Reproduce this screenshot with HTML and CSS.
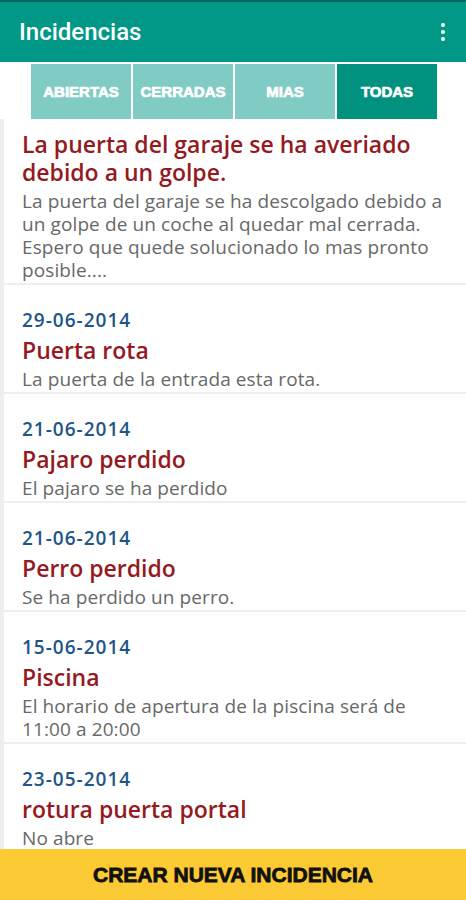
FILE: index.html
```html
<!DOCTYPE html>
<html lang="es">

<head>
    <meta charset="UTF-8" />
    <title>Incidencias</title>
    <link rel="stylesheet" href="styles.css">
</head>

<body>
    <div class="app">
        <div class="toolbar">
            <h1>Incidencias</h1>
            <div class="menu-dots"><span></span><span></span><span></span></div>
        </div>

        <div class="tabs">
            <div class="tab">ABIERTAS</div>
            <div class="tab">CERRADAS</div>
            <div class="tab">MIAS</div>
            <div class="tab active">TODAS</div>
        </div>

        <div class="list">
            <div class="card first">
                <div class="title">La puerta del garaje se ha averiado debido a un golpe.</div>
                <div class="desc">La puerta del garaje se ha descolgado debido a un golpe de un coche al quedar mal cerrada. Espero que quede solucionado lo mas pronto posible....</div>
            </div>
            <div class="card">
                <div class="date">29-06-2014</div>
                <div class="title">Puerta rota</div>
                <div class="desc">La puerta de la entrada esta rota.</div>
            </div>
            <div class="card">
                <div class="date">21-06-2014</div>
                <div class="title">Pajaro perdido</div>
                <div class="desc">El pajaro se ha perdido</div>
            </div>
            <div class="card">
                <div class="date">21-06-2014</div>
                <div class="title">Perro perdido</div>
                <div class="desc">Se ha perdido un perro.</div>
            </div>
            <div class="card">
                <div class="date">15-06-2014</div>
                <div class="title">Piscina</div>
                <div class="desc">El horario de apertura de la piscina será de 11:00 a 20:00</div>
            </div>
            <div class="card">
                <div class="date">23-05-2014</div>
                <div class="title">rotura puerta portal</div>
                <div class="desc">No abre</div>
            </div>
        </div>

        <button class="create-btn">CREAR NUEVA INCIDENCIA</button>
    </div>
</body>

</html>
```

FILE: styles.css
```css
body {
    margin: 0;
    padding: 0;
    background: #fff;
    font-family: "Open Sans", "Noto Sans", sans-serif;
}

.app {
    display: flex;
    flex-direction: column;
    height: 100vh;
    overflow: hidden;
}

.toolbar {
    background: #009786;
    border-top: 2px solid #00695c;
    height: 62px;
    display: flex;
    align-items: center;
    justify-content: space-between;
    padding: 0 21px 0 19px;
    box-sizing: border-box;
    flex-shrink: 0;
}

.toolbar h1 {
    margin: 0;
    color: #fff;
    font-family: Roboto, sans-serif;
    font-weight: 500;
    font-size: 24px;
}

.menu-dots {
    display: flex;
    flex-direction: column;
    gap: 3px;
}

.menu-dots span {
    width: 4px;
    height: 4px;
    border-radius: 50%;
    background: #fff;
}

.tabs {
    display: flex;
    gap: 2px;
    padding: 2px 0 0 31px;
    flex-shrink: 0;
}

.tab {
    width: 100px;
    height: 55px;
    background: #80cbc4;
    color: #fff;
    display: flex;
    align-items: center;
    justify-content: center;
    font-family: "Liberation Sans", Arial, sans-serif;
    font-weight: bold;
    font-size: 15px;
    -webkit-text-stroke: 0.7px #fff;
}

.tab.active {
    background: #00917f;
}

.list {
    flex: 1;
    overflow: hidden;
    background: #eeeeee;
}

.card {
    background: #fff;
    margin: 0 0 2px 4px;
    padding: 23px 10px 1px 18px;
}

.card.first {
    padding-top: 11px;
}

.date {
    color: #1f5688;
    font-size: 19px;
    letter-spacing: 1px;
    font-weight: 600;
    line-height: 24px;
    margin-bottom: 4px;
}

.title {
    color: #941a1f;
    font-size: 23px;
    font-weight: 600;
    line-height: 28px;
    margin-bottom: 4px;
}

.desc {
    color: #686868;
    font-size: 19px;
    letter-spacing: 0.1px;
    font-weight: 500;
    line-height: 23px;
}

.create-btn {
    flex-shrink: 0;
    height: 51px;
    border: none;
    background: #fcca34;
    color: #111;
    font-family: "Liberation Sans", Arial, sans-serif;
    font-weight: bold;
    font-size: 21px;
    -webkit-text-stroke: 0.8px #111;
    padding: 0;
}
```
